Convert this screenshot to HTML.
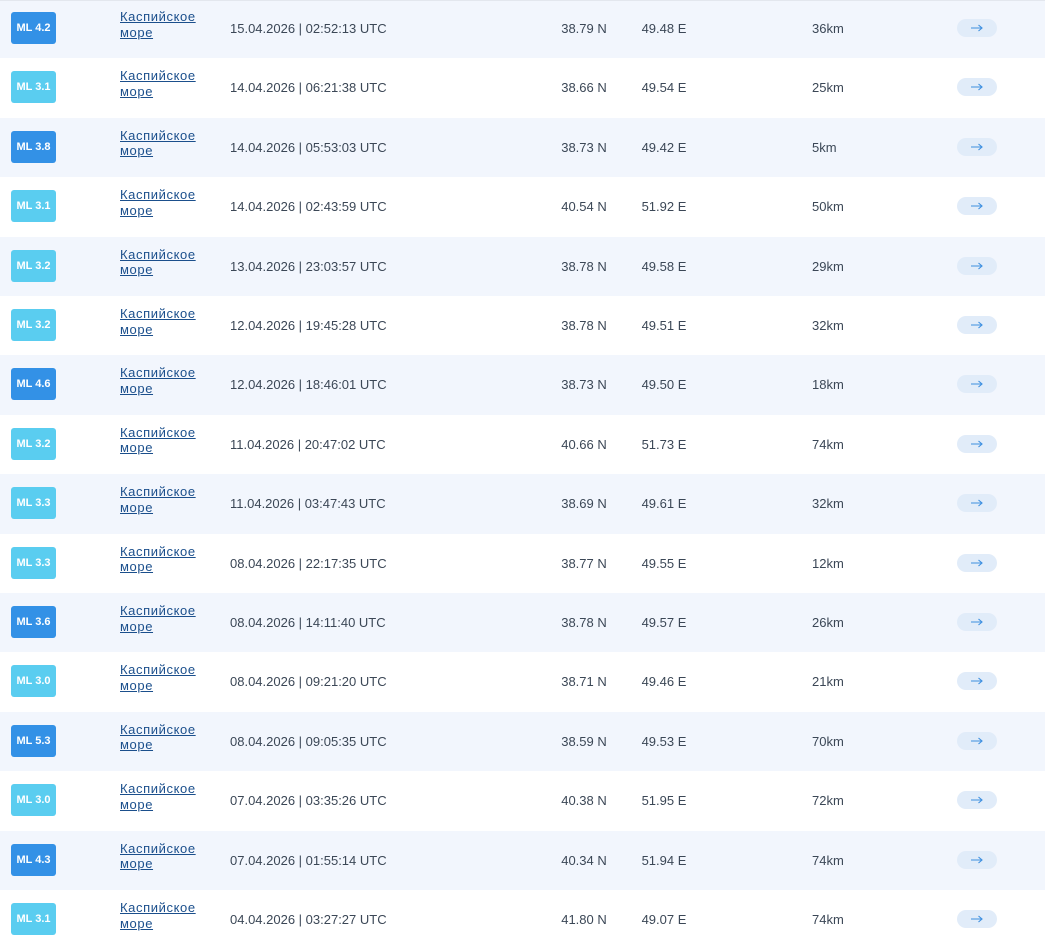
<!DOCTYPE html>
<html><head><meta charset="utf-8"><style>
body{margin:0;width:1045px;height:949px;overflow:hidden;background:#fff;font-family:"Liberation Sans",sans-serif;color:#3b4756;font-size:13px}
.r{position:absolute;left:0;width:1045px;height:59.4px}
.r.g{background:#f2f6fd}
.b{position:absolute;left:11px;top:13px;width:45px;height:32px;border-radius:3px;color:#fff;font-size:11px;font-weight:bold;text-align:center;line-height:32px}
.d{background:#3391e6}.l{background:#5acdf0}
.p{position:absolute;left:120px;top:10px;color:#1b4f8c;text-decoration:underline;line-height:15.5px;font-size:13px;letter-spacing:0.6px}
.t{position:absolute;left:230px;top:22px}
.la{position:absolute;left:544px;width:80px;text-align:center;top:22px}
.lo{position:absolute;left:624px;width:80px;text-align:center;top:22px}
.km{position:absolute;left:812px;top:22px}
.a{position:absolute;left:957px;top:20px;width:40px;height:18px;border-radius:9px;background:#e1ecf9}
.a svg{position:absolute;left:13px;top:4px}
</style></head><body>
<div style="position:absolute;top:0;left:0;width:1045px;height:1px;background:#e3e7ee;z-index:2"></div>
<script>
var d=[["d","4.2","15.04.2026 | 02:52:13 UTC","38.79 N","49.48 E","36km"],
["l","3.1","14.04.2026 | 06:21:38 UTC","38.66 N","49.54 E","25km"],
["d","3.8","14.04.2026 | 05:53:03 UTC","38.73 N","49.42 E","5km"],
["l","3.1","14.04.2026 | 02:43:59 UTC","40.54 N","51.92 E","50km"],
["l","3.2","13.04.2026 | 23:03:57 UTC","38.78 N","49.58 E","29km"],
["l","3.2","12.04.2026 | 19:45:28 UTC","38.78 N","49.51 E","32km"],
["d","4.6","12.04.2026 | 18:46:01 UTC","38.73 N","49.50 E","18km"],
["l","3.2","11.04.2026 | 20:47:02 UTC","40.66 N","51.73 E","74km"],
["l","3.3","11.04.2026 | 03:47:43 UTC","38.69 N","49.61 E","32km"],
["l","3.3","08.04.2026 | 22:17:35 UTC","38.77 N","49.55 E","12km"],
["d","3.6","08.04.2026 | 14:11:40 UTC","38.78 N","49.57 E","26km"],
["l","3.0","08.04.2026 | 09:21:20 UTC","38.71 N","49.46 E","21km"],
["d","5.3","08.04.2026 | 09:05:35 UTC","38.59 N","49.53 E","70km"],
["l","3.0","07.04.2026 | 03:35:26 UTC","40.38 N","51.95 E","72km"],
["d","4.3","07.04.2026 | 01:55:14 UTC","40.34 N","51.94 E","74km"],
["l","3.1","04.04.2026 | 03:27:27 UTC","41.80 N","49.07 E","74km"]];
var h="";
d.forEach(function(r,i){h+='<div class="r'+(i%2==0?' g':'')+'" style="top:'+(i*59.4-1)+'px"><div class="b '+r[0]+'">ML '+r[1]+'</div><span class="p">Каспийское<br>море</span><span class="t">'+r[2]+'</span><span class="la">'+r[3]+'</span><span class="lo">'+r[4]+'</span><span class="km">'+r[5]+'</span><span class="a"><svg width="14" height="10" viewBox="0 0 14 10"><path d="M1 5H12M8.5 2L12 5L8.5 8" fill="none" stroke="#3d8fe0" stroke-width="1.1"/></svg></span></div>';});
document.write(h);
</script>
</body></html>
